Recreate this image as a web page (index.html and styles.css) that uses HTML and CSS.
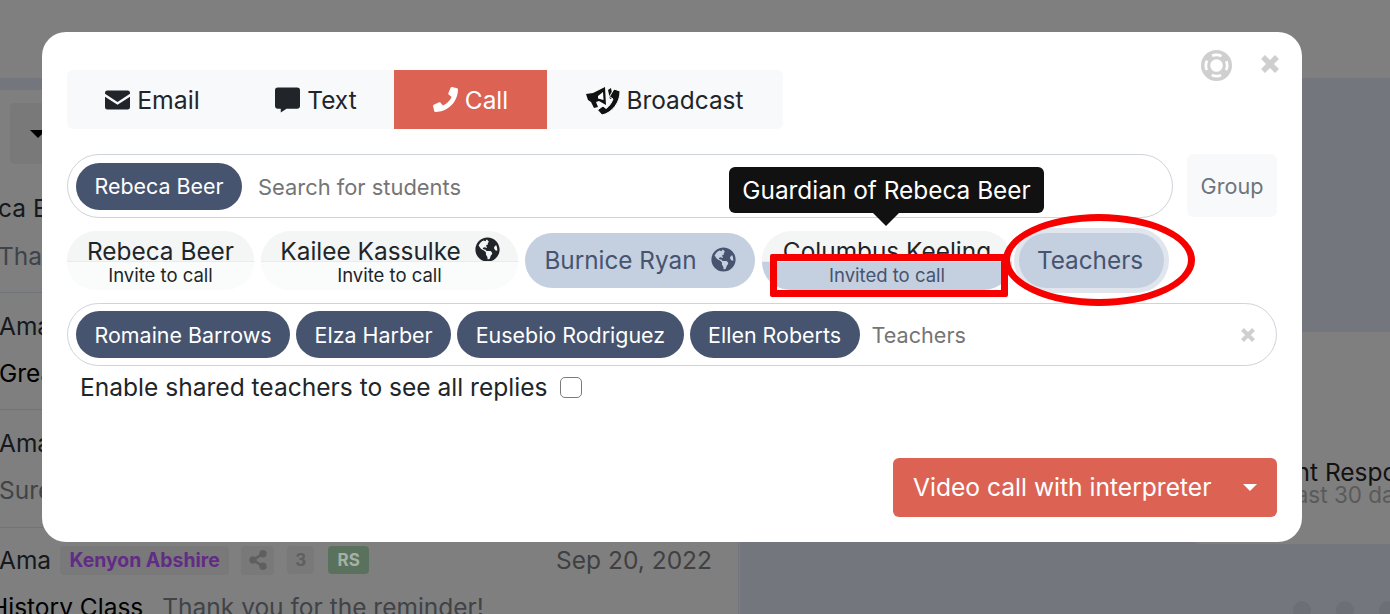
FILE: index.html
```html
<!DOCTYPE html>
<html lang="en">
<head>
<meta charset="utf-8">
<title>Call</title>
<link rel="stylesheet" href="styles.css">
</head>
<body>
<div class="backdrop">
  <div class="bg-top"></div>
  <div class="bg-band"></div>
  <aside class="bg-list">
    <div class="bg-filter"><span class="bg-caret"></span></div>
    <div class="bg-row bg-row-1"><span class="bg-name">ca Beer</span><span class="bg-muted">Thanks</span></div>
    <div class="bg-row bg-row-2"><span class="bg-name">Ama</span><span class="bg-black">Great</span></div>
    <div class="bg-row bg-row-3"><span class="bg-name">Ama</span><span class="bg-muted">Sure</span></div>
    <div class="bg-row bg-row-4">
      <div class="bg-head">
        <span class="bg-name">Ama</span>
        <span class="bg-tag">Kenyon Abshire</span>
        <span class="bg-share"><svg viewBox="0 0 448 512" width="18" height="20"><path d="M352 320c-22.600 0-43.400 7.800-59.800 20.900l-102.500-64.100a96.600 96.600 0 0 0 0-41.700l102.500-64.100C308.600 184.200 329.400 192 352 192c53 0 96-43 96-96S405 0 352 0s-96 43-96 96c0 7.200.8 14.100 2.300 20.900l-102.500 64.100C139.400 167.800 118.600 160 96 160c-53 0-96 43-96 96s43 96 96 96c22.600 0 43.400-7.800 59.800-20.900l102.500 64.100A96.300 96.300 0 0 0 256 416c0 53 43 96 96 96s96-43 96-96-43-96-96-96z"/></svg></span>
        <span class="bg-count">3</span>
        <span class="bg-rs">RS</span>
        <span class="bg-date">Sep 20, 2022</span>
      </div>
      <div class="bg-sub"><span class="bg-black">History Class</span><span class="bg-muted">Thank you for the reminder!</span></div>
    </div>
  </aside>
  <div class="bg-main">
    <div class="bg-card">
      <div class="bg-card-title">Parent Response</div>
      <div class="bg-card-sub">Last 30 days</div>
    </div>
    <div class="bg-dots"><span></span><span></span><span></span></div>
  </div>
</div>

<main class="modal">
  <div class="modal-tools">
    <svg class="help-icon" viewBox="0 0 32 32" width="31" height="31"><circle cx="16" cy="16" r="16" fill="#cfcfcf"/><circle cx="16" cy="16" r="6.500" fill="#fff"/><circle cx="16" cy="16" r="11" fill="none" stroke="#fff" stroke-width="2.800" stroke-dasharray="10 7.280" stroke-dashoffset="5"/></svg>
    <svg class="close-icon" viewBox="0 0 20 20" width="20" height="20"><path d="M3 3 17 17M17 3 3 17" stroke="#cfcfcf" stroke-width="5.500"/></svg>
  </div>

  <nav class="tabs">
    <a class="tab tab-email">
      <svg viewBox="0 0 26 20" width="25" height="20"><path fill="#212529" d="M2.500 0h21A2.500 2.500 0 0 1 26 2.500v1L13 12 0 3.500v-1A2.500 2.500 0 0 1 2.500 0zM0 6.500l13 8.500 13-8.500v11a2.500 2.500 0 0 1-2.500 2.500h-21A2.500 2.500 0 0 1 0 17.500z"/></svg>
      Email
    </a>
    <a class="tab tab-text">
      <svg viewBox="0 0 26 26" width="25" height="26"><path fill="#212529" d="M3 0h20a3 3 0 0 1 3 3v16a3 3 0 0 1-3 3H12l-6 4v-4H3a3 3 0 0 1-3-3V3a3 3 0 0 1 3-3z"/></svg>
      Text
    </a>
    <a class="tab tab-call active">
      <svg viewBox="0 0 512 512" width="25" height="25"><path fill="#fff" d="M493.400 24.600l-104-24c-11.300-2.600-22.900 3.300-27.500 13.900l-48 112c-4.200 9.800-1.400 21.300 6.900 28l60.600 49.600c-36 76.700-98.900 140.500-177.200 177.200l-49.600-60.600c-6.800-8.300-18.200-11.100-28-6.900l-112 48C3.900 366.500-2 378.100.6 389.400l24 104C27.100 504.200 36.700 512 48 512c256.100 0 464-207.500 464-464 0-11.200-7.700-20.900-18.600-23.400z"/></svg>
      Call
    </a>
    <a class="tab tab-broadcast">
      <svg viewBox="0 0 36 30" width="36" height="30"><path fill="#111" d="M1 9 8 8 20 2 21 20 14 16 11 17 13 22 9 23 6 17 3 15z"/><path fill="#111" d="M23 5 26 3 28 13 25 14z"/><path fill="#fff" d="M13 11 18 7 18.500 15 13 13.500z"/><path fill="#111" stroke="#fff" stroke-width="1" d="M29 4 35 6C35.500 17 27 28 17 30L12.500 25 18 21 21 23.500C24.500 21 26.500 18 28 14L24.500 11.500z"/></svg>
      Broadcast
    </a>
  </nav>

  <div class="search-row">
    <div class="pill-input">
      <span class="chip">Rebeca Beer</span>
      <span class="placeholder">Search for students</span>
    </div>
    <span class="group-btn">Group</span>
  </div>

  <div class="recipients">
    <div class="contact contact-r">
      <div class="contact-name">Rebeca Beer</div>
      <div class="contact-action">Invite to call</div>
    </div>
    <div class="contact contact-k">
      <div class="contact-name">Kailee Kassulke
        <svg class="globe" viewBox="0 0 496 512" width="25" height="25"><path fill="#212529" d="M248 8C111.030 8 0 119.030 0 256s111.030 248 248 248 248-111.030 248-248S384.970 8 248 8zm82.290 357.600c-3.900 3.880-7.990 7.950-11.310 11.280-2.990 3-5.100 6.700-6.170 10.710-1.510 5.660-2.730 11.380-4.770 16.870l-17.390 46.850c-13.760 3-28 4.690-42.650 4.690v-27.380c1.690-12.620-7.640-36.260-22.630-51.250-6-6-9.370-14.140-9.370-22.630v-32.010c0-11.640-6.270-22.340-16.460-27.970-14.370-7.950-34.810-19.060-48.810-26.110-11.480-5.780-22.100-13.140-31.650-21.750l-.8-.72a114.792 114.792 0 0 1-18.060-20.740c-9.380-13.770-24.660-36.420-34.590-51.140 20.470-45.500 57.360-82.040 103.200-101.890l24.010 12.010C203.480 89.740 216 82.010 216 70.110v-11.300c7.990-1.290 16.120-2.110 24.450-2.420l28.300 28.300c6.250 6.250 6.250 16.380 0 22.630L264 112l-10.340 10.340c-3.120 3.120-3.120 8.190 0 11.310l4.690 4.690c3.120 3.120 3.120 8.190 0 11.310l-8 8a8.008 8.008 0 0 1-5.660 2.340h-8.990c-2.080 0-4.080.81-5.580 2.270l-9.920 9.650a8.008 8.008 0 0 0-1.580 9.310l15.590 31.190c2.660 5.320-1.210 11.580-7.150 11.580h-5.640c-1.930 0-3.790-.7-5.240-1.960l-9.280-8.060a16.017 16.017 0 0 0-15.550-3.100l-31.170 10.390a11.950 11.950 0 0 0-8.170 11.340c0 4.530 2.560 8.660 6.610 10.690l11.080 5.540c9.410 4.710 19.790 7.160 30.310 7.160s22.590 27.290 32 32h66.750c8.490 0 16.620 3.370 22.630 9.370l13.690 13.690a30.503 30.503 0 0 1 8.930 21.570 46.536 46.536 0 0 1-13.720 32.980zM417 274.250c-5.790-1.450-10.840-5-14.150-9.970l-17.980-26.970a23.970 23.970 0 0 1 0-26.620l19.590-29.380c2.320-3.470 5.500-6.290 9.240-8.150l12.980-6.490C440.200 193.590 448 223.870 448 256c0 8.670-.74 17.160-1.820 25.540L417 274.250z"/></svg>
      </div>
      <div class="contact-action">Invite to call</div>
    </div>
    <div class="contact-solid contact-b">Burnice Ryan
      <svg class="globe" viewBox="0 0 496 512" width="25" height="25"><path fill="#46546f" d="M248 8C111.030 8 0 119.030 0 256s111.030 248 248 248 248-111.030 248-248S384.970 8 248 8zm82.290 357.600c-3.900 3.880-7.990 7.950-11.310 11.280-2.990 3-5.100 6.700-6.170 10.710-1.510 5.660-2.730 11.380-4.770 16.870l-17.390 46.850c-13.760 3-28 4.690-42.650 4.690v-27.380c1.690-12.620-7.640-36.260-22.630-51.250-6-6-9.370-14.140-9.370-22.630v-32.010c0-11.640-6.270-22.340-16.460-27.970-14.370-7.950-34.810-19.060-48.810-26.110-11.480-5.780-22.100-13.140-31.650-21.750l-.8-.72a114.792 114.792 0 0 1-18.060-20.740c-9.380-13.770-24.660-36.420-34.590-51.140 20.470-45.500 57.360-82.040 103.200-101.890l24.010 12.010C203.480 89.740 216 82.010 216 70.110v-11.300c7.990-1.290 16.120-2.110 24.450-2.420l28.300 28.300c6.250 6.250 6.250 16.380 0 22.630L264 112l-10.340 10.340c-3.120 3.120-3.120 8.190 0 11.310l4.690 4.690c3.120 3.120 3.120 8.190 0 11.310l-8 8a8.008 8.008 0 0 1-5.660 2.340h-8.990c-2.080 0-4.080.81-5.580 2.270l-9.920 9.650a8.008 8.008 0 0 0-1.580 9.310l15.590 31.190c2.660 5.320-1.210 11.580-7.150 11.580h-5.640c-1.930 0-3.790-.7-5.240-1.960l-9.280-8.060a16.017 16.017 0 0 0-15.550-3.100l-31.170 10.390a11.950 11.950 0 0 0-8.170 11.340c0 4.530 2.560 8.660 6.610 10.690l11.080 5.540c9.410 4.710 19.790 7.160 30.310 7.160s22.590 27.290 32 32h66.750c8.490 0 16.620 3.370 22.630 9.370l13.690 13.690a30.503 30.503 0 0 1 8.930 21.570 46.536 46.536 0 0 1-13.720 32.980zM417 274.250c-5.790-1.450-10.840-5-14.150-9.970l-17.980-26.970a23.970 23.970 0 0 1 0-26.620l19.590-29.380c2.320-3.470 5.500-6.290 9.240-8.150l12.980-6.490C440.200 193.590 448 223.870 448 256c0 8.670-.74 17.160-1.820 25.540L417 274.250z"/></svg>
    </div>
    <div class="contact contact-c">
      <div class="contact-name">Columbus Keeling</div>
      <div class="contact-action invited">Invited to call</div>
      <div class="tooltip">Guardian of Rebeca Beer</div>
      <div class="mark-rect"></div>
    </div>
    <div class="teachers-wrap">
      <div class="contact-solid contact-t">Teachers</div>
      <div class="mark-ellipse"></div>
    </div>
  </div>

  <div class="pill-input teachers-input">
    <span class="chip">Romaine Barrows</span>
    <span class="chip">Elza Harber</span>
    <span class="chip">Eusebio Rodriguez</span>
    <span class="chip">Ellen Roberts</span>
    <span class="placeholder">Teachers</span>
    <svg class="clear-icon" viewBox="0 0 16 16" width="16" height="16"><path d="M2.500 2.500 13.500 13.500M13.500 2.500 2.500 13.500" stroke="#cfcfcf" stroke-width="4"/></svg>
  </div>

  <label class="share-row">Enable shared teachers to see all replies <span class="checkbox"></span></label>

  <div class="footer">
    <button class="send">Video call with interpreter <span class="send-caret"></span></button>
  </div>
</main>
</body>
</html>
```
FILE: styles.css
```css
* { box-sizing: border-box; }
html, body { margin: 0; height: 100%; }
body {
  width: 1390px;
  height: 614px;
  overflow: hidden;
  position: relative;
  font-family: Inter, "Liberation Sans", sans-serif;
  background: #7f7f7f;
  color: #212529;
}

/* dimmed page behind the dialog */
.backdrop {
  position: absolute;
  inset: 0;
  overflow: hidden;
  background: #7f7f7f;
}
.bg-top { height: 78px; background: #7f7f7f; }
.bg-band { height: 12px; background: #73777d; }
.bg-list {
  position: absolute;
  left: 0; top: 90px;
  width: 739px;
  height: 524px;
  background: #7f7f7f;
  border-right: 1px solid #72757b;
}
.bg-filter {
  position: absolute;
  left: 10px; top: 13px;
  width: 60px; height: 61px;
  background: #797979;
  border-radius: 5px;
}
.bg-caret {
  position: absolute;
  left: 20px; top: 27px;
  border-left: 8px solid transparent;
  border-right: 8px solid transparent;
  border-top: 8px solid #000;
}
.bg-row {
  position: absolute;
  left: 0; width: 739px;
  font-size: 24.500px;
  white-space: nowrap;
  display: flex;
  flex-direction: column;
}
.bg-row-1 { top: 103px; height: 98px; left: -2px; width: 740px; gap: 18px; }
.bg-row-2 { top: 202px; height: 117px; left: -1px; border-top: 1px solid #6f747c; padding-top: 18px; gap: 17px; }
.bg-row-3 { top: 319px; height: 118px; left: -1px; border-top: 1px solid #6f747c; padding-top: 18px; gap: 17px; }
.bg-row-4 { top: 437px; height: 90px; left: -1px; border-top: 1px solid #6f747c; padding-top: 17px; gap: 17px; }
.bg-name { color: #15181c; }
.bg-muted { color: #404347; }
.bg-black { color: #000; }
.bg-head { display: flex; align-items: center; }
.bg-tag {
  margin-left: 9px;
  width: 169px;
  height: 29px;
  display: flex;
  align-items: center;
  justify-content: center;
  font-size: 19.400px;
  font-weight: 700;
  color: #622b86;
  background: #797979;
  border-radius: 4px;
}
.bg-share {
  margin-left: 12px;
  width: 33px; height: 29px;
  background: #797979;
  border-radius: 4px;
  display: flex; align-items: center; justify-content: center;
  fill: #5f5f5f;
}
.bg-count {
  margin-left: 13px;
  width: 27px; height: 28px;
  background: #797979;
  border-radius: 4px;
  color: #5f5f5f;
  font-size: 17px;
  font-weight: 700;
  display: flex; align-items: center; justify-content: center;
}
.bg-rs {
  margin-left: 14px;
  width: 41px; height: 28px;
  background: #5a725d;
  border-radius: 4px;
  color: #a4b1a5;
  font-size: 17px;
  font-weight: 700;
  display: flex; align-items: center; justify-content: center;
}
.bg-date { margin-left: auto; margin-right: 26px; color: #404040; font-size: 24.500px; }
.bg-sub { display: flex; gap: 19px; margin-left: -9px; }
.bg-main {
  position: absolute;
  left: 740px; top: 90px;
  width: 650px; height: 524px;
  background: #73777d;
}
.bg-card {
  position: absolute;
  left: 450px; top: 242px;
  width: 260px; height: 212px;
  background: #7f7f7f;
  border-radius: 10px;
  padding: 126px 0 0 0;
  white-space: nowrap;
}
.bg-card-title { font-size: 24.500px; color: #121212; line-height: 28px; margin-left: 53px; }
.bg-card-sub { font-size: 22.500px; color: #5a5a5a; line-height: 24px; margin-left: 93px; margin-top: -3px; }
.bg-dots { position: absolute; left: 553px; top: 511px; display: flex; gap: 25px; }
.bg-dots span { width: 18px; height: 18px; border-radius: 50%; background: #6c7076; }

/* dialog */
.modal {
  position: absolute;
  left: 42px; top: 32px;
  width: 1260px; height: 510px;
  background: #fff;
  border-radius: 24px;
  padding: 38px 25px 25px;
  display: flex;
  flex-direction: column;
}
.modal-tools {
  position: absolute;
  right: 0; top: 0;
}
.help-icon { position: absolute; right: 70px; top: 18px; }
.close-icon { position: absolute; right: 22px; top: 22px; }

.tabs {
  display: flex;
  align-self: flex-start;
  height: 59px;
  background: #f8f9fa;
  border-radius: 6px;
  font-size: 24.400px;
}
.tab {
  display: flex;
  align-items: center;
  justify-content: center;
  gap: 7px;
  padding-top: 1px;
  color: #212529;
  white-space: nowrap;
}
.tab svg { margin-top: -1px; }
.tab-email { width: 170px; padding-left: 1px; font-size: 24.800px; }
.tab-text { width: 157px; padding-left: 1px; }
.tab-call { width: 153px; background: #dc6354; color: #fff; }
.tab-broadcast { width: 236px; padding-right: 2px; gap: 6px; }

.search-row { display: flex; gap: 14px; margin-top: 25px; align-items: flex-start; }
.pill-input {
  display: flex;
  align-items: center;
  gap: 5px;
  border: 1px solid #ced4da;
  border-radius: 32px;
  padding: 0 8px;
  height: 64px;
}
.search-row .pill-input { width: 1106px; }
.chip {
  height: 47px;
  padding: 0 18.500px;
  display: flex;
  align-items: center;
  background: #46546f;
  color: #fff;
  border-radius: 24px;
  font-size: 21.400px;
  white-space: nowrap;
}
.placeholder { font-size: 21.900px; color: #757575; margin: 2px 0 0 11px; white-space: nowrap; }
.group-btn {
  width: 90px; height: 63px;
  background: #f8f9fa;
  border-radius: 6px;
  color: #6c757d;
  font-size: 21.600px;
  display: flex;
  align-items: center;
  justify-content: center;
}

.recipients { display: flex; gap: 7px; margin-top: 13px; height: 60px; align-items: flex-start; }
.contact {
  position: relative;
  height: 59px;
  border-radius: 30px;
  overflow: visible;
  text-align: center;
  white-space: nowrap;
  background: #f8f9fa;
}
.contact-name {
  height: 31px;
  font-size: 24.400px;
  line-height: 41px;
  background: #f4f5f5;
  border-bottom: 1px solid #e9ecef;
  border-radius: 30px 30px 0 0;
  overflow: hidden;
  padding: 0 18px;
  color: #212529;
}
.contact-name .globe { vertical-align: -2px; margin-left: 7px; }
.contact-action {
  height: 28px;
  font-size: 18.500px;
  line-height: 27px;
  color: #212529;
  background: #fafbfb;
  border-radius: 0 0 30px 30px;
}
.contact-r { width: 187px; }
.contact-k { width: 257px; }
.contact-k .contact-name { padding-left: 19px; padding-right: 18px; }
.contact-c { width: 250px; }
.contact-solid {
  height: 55px;
  margin-top: 2px;
  padding-bottom: 2px;
  border-radius: 28px;
  background: #c4cfe0;
  color: #46546f;
  font-size: 24.300px;
  display: flex;
  align-items: center;
  justify-content: center;
  gap: 14px;
  white-space: nowrap;
}
.contact-b { width: 230px; }
.teachers-wrap { position: relative; width: 150px; }
.contact-t {
  width: 145px;
  padding-right: 3px;
  box-shadow: 0 0 0 5px #e0e5ee;
}
.invited { background: #c4cfe0; color: #46546f; }
.tooltip {
  position: absolute;
  left: -33px; top: -64px;
  width: 315px; height: 46px;
  line-height: 46px;
  background: #111;
  color: #fff;
  font-size: 24.400px;
  border-radius: 6px;
}
.tooltip::after {
  content: "";
  position: absolute;
  left: 144px; top: 46px;
  border-left: 13px solid transparent;
  border-right: 13px solid transparent;
  border-top: 13px solid #111;
}
.mark-rect {
  position: absolute;
  left: 8px; top: 23px;
  width: 238px; height: 43px;
  border: 7px solid #f70000;
  border-radius: 2px;
}
.mark-ellipse {
  position: absolute;
  left: -16px; top: -17px;
  width: 192px; height: 92px;
  border: 7px solid #f70000;
  border-radius: 50%;
}

.teachers-input { margin-top: 12px; height: 63px; padding-right: 20px; gap: 6px; }
.teachers-input .chip { font-size: 21.450px; }
.teachers-input .placeholder { margin-left: 6px; font-size: 21.600px; margin-top: 0; }
.clear-icon { margin-left: auto; }

.share-row {
  display: flex;
  align-items: center;
  margin: 6px 0 0 13px;
  font-size: 24.550px;
  color: #212529;
  gap: 13px;
}
.checkbox {
  width: 22px; height: 21px;
  border: 1px solid #7a7a7a;
  border-radius: 5px;
  background: #fff;
}
.footer { margin-top: auto; display: flex; justify-content: flex-end; }
.send {
  width: 384px; height: 59px;
  background: #dc6354;
  color: #fff;
  border: 0;
  border-radius: 6px;
  font: inherit;
  font-size: 24.600px;
  display: flex;
  align-items: center;
  justify-content: space-between;
  padding: 0 20px 2px;
}
.send-caret {
  border-left: 7px solid transparent;
  border-right: 7px solid transparent;
  border-top: 7px solid #fff;
  margin-top: 2px;
}
```
